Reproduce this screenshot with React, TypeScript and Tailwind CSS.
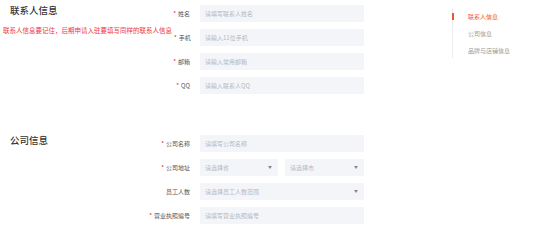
import { ReactNode } from "react";

const font = { fontFamily: '"Noto Sans CJK SC", "Noto Sans", sans-serif' };

function Label({ text, required = true }: { text: string; required?: boolean }) {
  return (
    <span className="text-[6px] leading-none text-[#555] whitespace-nowrap">
      {required && <span className="text-[#f5222d] mr-[2px]">*</span>}
      {text}
    </span>
  );
}

function Input({ placeholder, select = false, w = "w-[164px]" }: { placeholder: string; select?: boolean; w?: string }) {
  return (
    <div className={`${w} h-[17px] bg-[#f3f5f9] flex items-center justify-between pl-[5px] pr-[6px]`}>
      <span className="text-[6px] leading-none text-[#b4b8c2] whitespace-nowrap">{placeholder}</span>
      {select && <span className="w-0 h-0 border-l-[2px] border-r-[2px] border-t-[3px] border-l-transparent border-r-transparent border-t-[#888]" />}
    </div>
  );
}

function Row({ left, label, required, children }: { left?: ReactNode; label: string; required?: boolean; children: ReactNode }) {
  return (
    <div className="flex h-[17px]">
      <div className="w-[190px] flex justify-between items-center">
        <div className="self-start">{left}</div>
        <Label text={label} required={required} />
      </div>
      <div className="ml-[10px] flex gap-[7px]">{children}</div>
    </div>
  );
}

const Title = ({ text }: { text: string }) => (
  <div className="pl-[10px] pt-[1px] text-[9.5px] leading-none text-[#333] font-medium whitespace-nowrap">{text}</div>
);

export default function App() {
  return (
    <div className="w-[547px] h-[245px] bg-white flex" style={font}>
      <div className="w-[452px] pt-[5px]">
        <div className="flex flex-col gap-[7px]">
          <Row left={<Title text="联系人信息" />} label="姓名">
            <Input placeholder="请填写联系人姓名" />
          </Row>
          <Row
            left={
              <div className="w-[174px] pl-[3px] -mt-[2px] text-[6.5px] leading-none text-[#f0353b] whitespace-nowrap">
                联系人信息要记住，后期申请入驻要填写同样的联系人信息
              </div>
            }
            label="手机"
          >
            <Input placeholder="请输入11位手机" />
          </Row>
          <Row label="邮箱">
            <Input placeholder="请输入常用邮箱" />
          </Row>
          <Row label="QQ">
            <Input placeholder="请输入联系人QQ" />
          </Row>
        </div>
        <div className="mt-[41px] flex flex-col gap-[7px]">
          <Row left={<Title text="公司信息" />} label="公司名称">
            <Input placeholder="请填写公司名称" />
          </Row>
          <Row label="公司地址">
            <Input placeholder="请选择省" select w="w-[78px]" />
            <Input placeholder="请选择市" select w="w-[79px]" />
          </Row>
          <Row label="员工人数" required={false}>
            <Input placeholder="请选择员工人数范围" select />
          </Row>
          <Row label="营业执照编号">
            <Input placeholder="请填写营业执照编号" />
          </Row>
        </div>
      </div>
      <div className="pt-[8px]">
        <div className="border-l border-[#ebedf0] h-[50px] flex flex-col gap-[11px] pt-[5px]">
          <div className="flex items-center h-[7px] -ml-px">
            <span className="w-[2px] h-[7px] bg-[#f0532d]" />
            <span className="ml-[14px] text-[6px] leading-none text-[#f0532d] whitespace-nowrap">联系人信息</span>
          </div>
          <span className="ml-[15px] text-[6px] leading-none text-[#999] whitespace-nowrap">公司信息</span>
          <span className="ml-[15px] text-[6px] leading-none text-[#999] whitespace-nowrap">品牌与店铺信息</span>
        </div>
      </div>
    </div>
  );
}
